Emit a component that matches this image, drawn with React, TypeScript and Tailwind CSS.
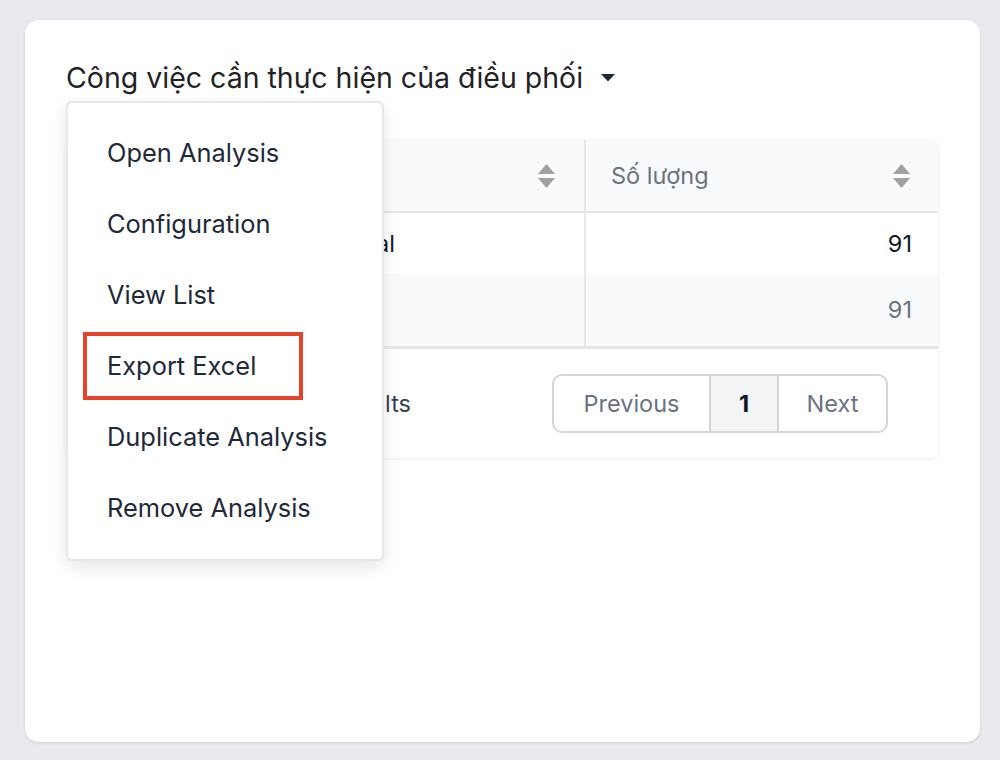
import { ChevronDown } from "lucide-react";

const menuItems = [
  "Open Analysis",
  "Configuration",
  "View List",
  "Export Excel",
  "Duplicate Analysis",
  "Remove Analysis",
];

function Caret() {
  return (
    <svg width="16" height="8" viewBox="0 0 16 8" className="fill-gray-800">
      <path d="M1 0h14L8 7.5z" />
    </svg>
  );
}

function SortIcon() {
  return (
    <svg width="19" height="26" viewBox="0 0 19 26" className="fill-neutral-400">
      <path d="M9.5 1l8.5 10H1z" />
      <path d="M9.5 25l8.5-10H1z" />
    </svg>
  );
}

export default function App() {
  void ChevronDown;

  return (
    <div
      className="min-h-[760px] bg-[#e9eaee] pt-[20px] pl-[25px] pr-[20px]"
      style={{ fontFamily: "Inter, 'Noto Sans', sans-serif" }}
    >
      <div className="relative h-[722px] rounded-[14px] bg-white pl-[41px] pr-[42px] pt-[40px] shadow-[0_1px_3px_rgba(0,0,0,0.12)]">
        {/* widget title */}
        <div className="flex h-[36px] items-center gap-[17px] text-[28.5px] text-[#1f2328]">
          <span>Công việc cần thực hiện của điều phối</span>
          <Caret />
        </div>

        {/* report table */}
        <div className="mt-[44px] overflow-hidden rounded-[8px] bg-white text-[23.5px] shadow-[0_1px_4px_rgba(0,0,0,0.08)]">
          <div className="flex h-[73px] border-b-2 border-gray-200 bg-gray-50 text-gray-500">
            <div className="flex w-[520px] items-center justify-between border-r-2 border-gray-200 pl-[24px] pr-[28px]">
              <span>Trạng thái</span>
              <SortIcon />
            </div>
            <div className="flex flex-1 items-center justify-between pl-[25px] pr-[27px]">
              <span>Số lượng</span>
              <SortIcon />
            </div>
          </div>
          <div className="flex h-[61px] text-gray-900">
            <div className="flex w-[520px] items-center border-r-2 border-gray-200">
              <span className="w-[329px] whitespace-nowrap text-right">Chờ điều phối - Normal</span>
            </div>
            <div className="flex flex-1 items-center justify-end pr-[26px]">91</div>
          </div>
          <div className="flex h-[75px] border-b-[3px] border-gray-200 bg-gray-50 text-gray-500">
            <div className="flex w-[520px] items-center border-r-2 border-gray-200 pl-[24px]">
              Tổng cộng
            </div>
            <div className="flex flex-1 items-center justify-end pr-[26px]">91</div>
          </div>
          <div className="flex h-[109px] items-center justify-between pr-[50px]">
            <span className="w-[345px] whitespace-nowrap text-right text-gray-700">
              Showing 1 to 1 of 1 results
            </span>
            <div className="flex h-[59px] overflow-hidden rounded-[10px] border-2 border-gray-300 text-gray-500">
              <div className="flex w-[155px] items-center justify-center">Previous</div>
              <div className="flex w-[70px] items-center justify-center border-x-2 border-gray-300 bg-gray-100 font-bold text-gray-900">
                1
              </div>
              <div className="flex w-[107px] items-center justify-center">Next</div>
            </div>
          </div>
        </div>

        {/* actions dropdown */}
        <div className="absolute left-[41px] top-[81px] w-[318px] rounded-[6px] border-2 border-gray-200 bg-white py-[15px] shadow-[0_6px_16px_rgba(0,0,0,0.1)]">
          {menuItems.map((item) => (
            <div
              key={item}
              className="relative flex h-[71px] items-center pl-[39px] text-[25.4px] text-gray-800"
            >
              {item}
              {item === "Export Excel" && (
                <div className="absolute left-[15px] top-[1px] h-[68px] w-[220px] border-[4px] border-[#e5432a]" />
              )}
            </div>
          ))}
        </div>
      </div>
    </div>
  );
}
